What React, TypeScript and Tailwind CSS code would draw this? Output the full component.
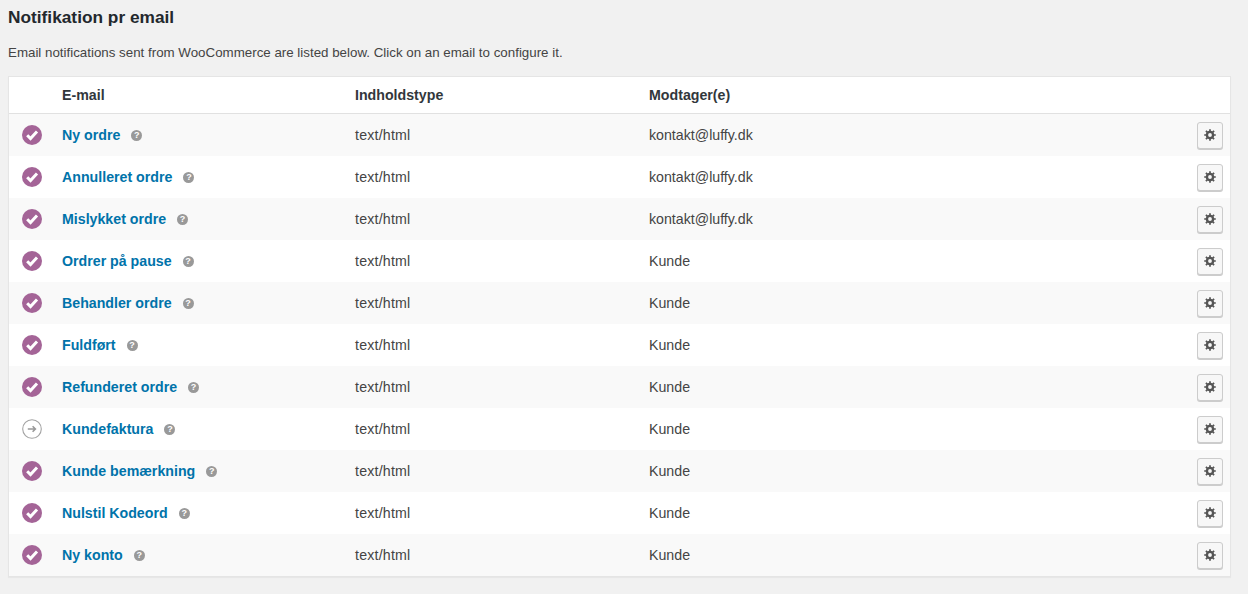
const EMAILS: { name: string; to: string; off?: boolean }[] = [
  { name: "Ny ordre", to: "kontakt@luffy.dk" },
  { name: "Annulleret ordre", to: "kontakt@luffy.dk" },
  { name: "Mislykket ordre", to: "kontakt@luffy.dk" },
  { name: "Ordrer på pause", to: "Kunde" },
  { name: "Behandler ordre", to: "Kunde" },
  { name: "Fuldført", to: "Kunde" },
  { name: "Refunderet ordre", to: "Kunde" },
  { name: "Kundefaktura", to: "Kunde", off: true },
  { name: "Kunde bemærkning", to: "Kunde" },
  { name: "Nulstil Kodeord", to: "Kunde" },
  { name: "Ny konto", to: "Kunde" },
];

function StatusIcon({ off }: { off?: boolean }) {
  if (off) {
    return (
      <svg width="20" height="20" viewBox="0 0 20 20" fill="none">
        <circle cx="10" cy="10" r="9.3" stroke="#a3a3a3" strokeWidth="1.1" />
        <path d="M5.8 10h7.4M10.6 7.2l2.8 2.8-2.8 2.8" stroke="#999" strokeWidth="1.6" />
      </svg>
    );
  }
  return (
    <svg width="20" height="20" viewBox="0 0 20 20" fill="none">
      <circle cx="10" cy="10" r="10" fill="#a46497" />
      <path d="M5.2 10.2l3.3 3.3 6.5-7" stroke="#fff" strokeWidth="3" />
    </svg>
  );
}

function HelpIcon() {
  return (
    <span className="flex h-[11px] w-[11px] items-center justify-center rounded-full bg-[#999] text-[9px] leading-none font-bold text-white">
      ?
    </span>
  );
}

function GearIcon() {
  return (
    <svg width="12" height="12" viewBox="0 0 12 12" fill="none">
      <circle cx="6" cy="6" r="3.1" stroke="#555" strokeWidth="2.4" />
      <path d="M6 0.2v11.6M0.2 6h11.6M1.9 1.9l8.2 8.2M10.1 1.9l-8.2 8.2" stroke="#555" strokeWidth="1.7" strokeDasharray="2.2 7.2 2.2" />
    </svg>
  );
}

export default function App() {
  return (
    <div className="h-[594px] overflow-hidden bg-[#f1f1f1] px-2 pt-[7px] font-['Liberation_Sans',Arial,sans-serif] text-[#444]">
      <h2 className="text-[17.3px] leading-5 font-bold text-[#23282d]">Notifikation pr email</h2>
      <p className="mt-4 text-[13.33px] leading-5 text-[#444]">
        Email notifications sent from WooCommerce are listed below. Click on an email to configure it.
      </p>

      <div className="mt-[13px] mr-[9px] border border-[#e5e5e5] bg-white shadow-[0_1px_1px_rgba(0,0,0,0.04)]">
        <div className="flex h-[37px] items-center border-b border-[#e1e1e1] pt-[2px] text-[14.2px] font-bold text-[#32373c]">
          <div className="w-[53px] shrink-0" />
          <div className="w-[293px] shrink-0">E-mail</div>
          <div className="w-[294px] shrink-0">Indholdstype</div>
          <div>Modtager(e)</div>
        </div>

        {EMAILS.map((email, i) => (
          <div
            key={email.name}
            className={`flex h-[42px] items-center text-[14.2px] ${i % 2 === 0 ? "bg-[#f9f9f9]" : "bg-white"}`}
          >
            <div className="flex w-[53px] shrink-0 pl-[13px]">
              <StatusIcon off={email.off} />
            </div>
            <div className="flex w-[293px] shrink-0 items-center gap-[11px] pt-[2px]">
              <a className="font-bold text-[#0073aa]">{email.name}</a>
              <HelpIcon />
            </div>
            <div className="w-[294px] shrink-0 pt-[2px] tracking-[0.2px]">text/html</div>
            <div className="flex-1 pt-[2px]">{email.to}</div>
            <button className="mr-[7px] flex h-[27px] w-[26px] items-center justify-center rounded-[3px] border border-[#ccc] bg-[#f7f7f7] shadow-[0_1px_0_#ccc]">
              <GearIcon />
            </button>
          </div>
        ))}
      </div>
    </div>
  );
}
